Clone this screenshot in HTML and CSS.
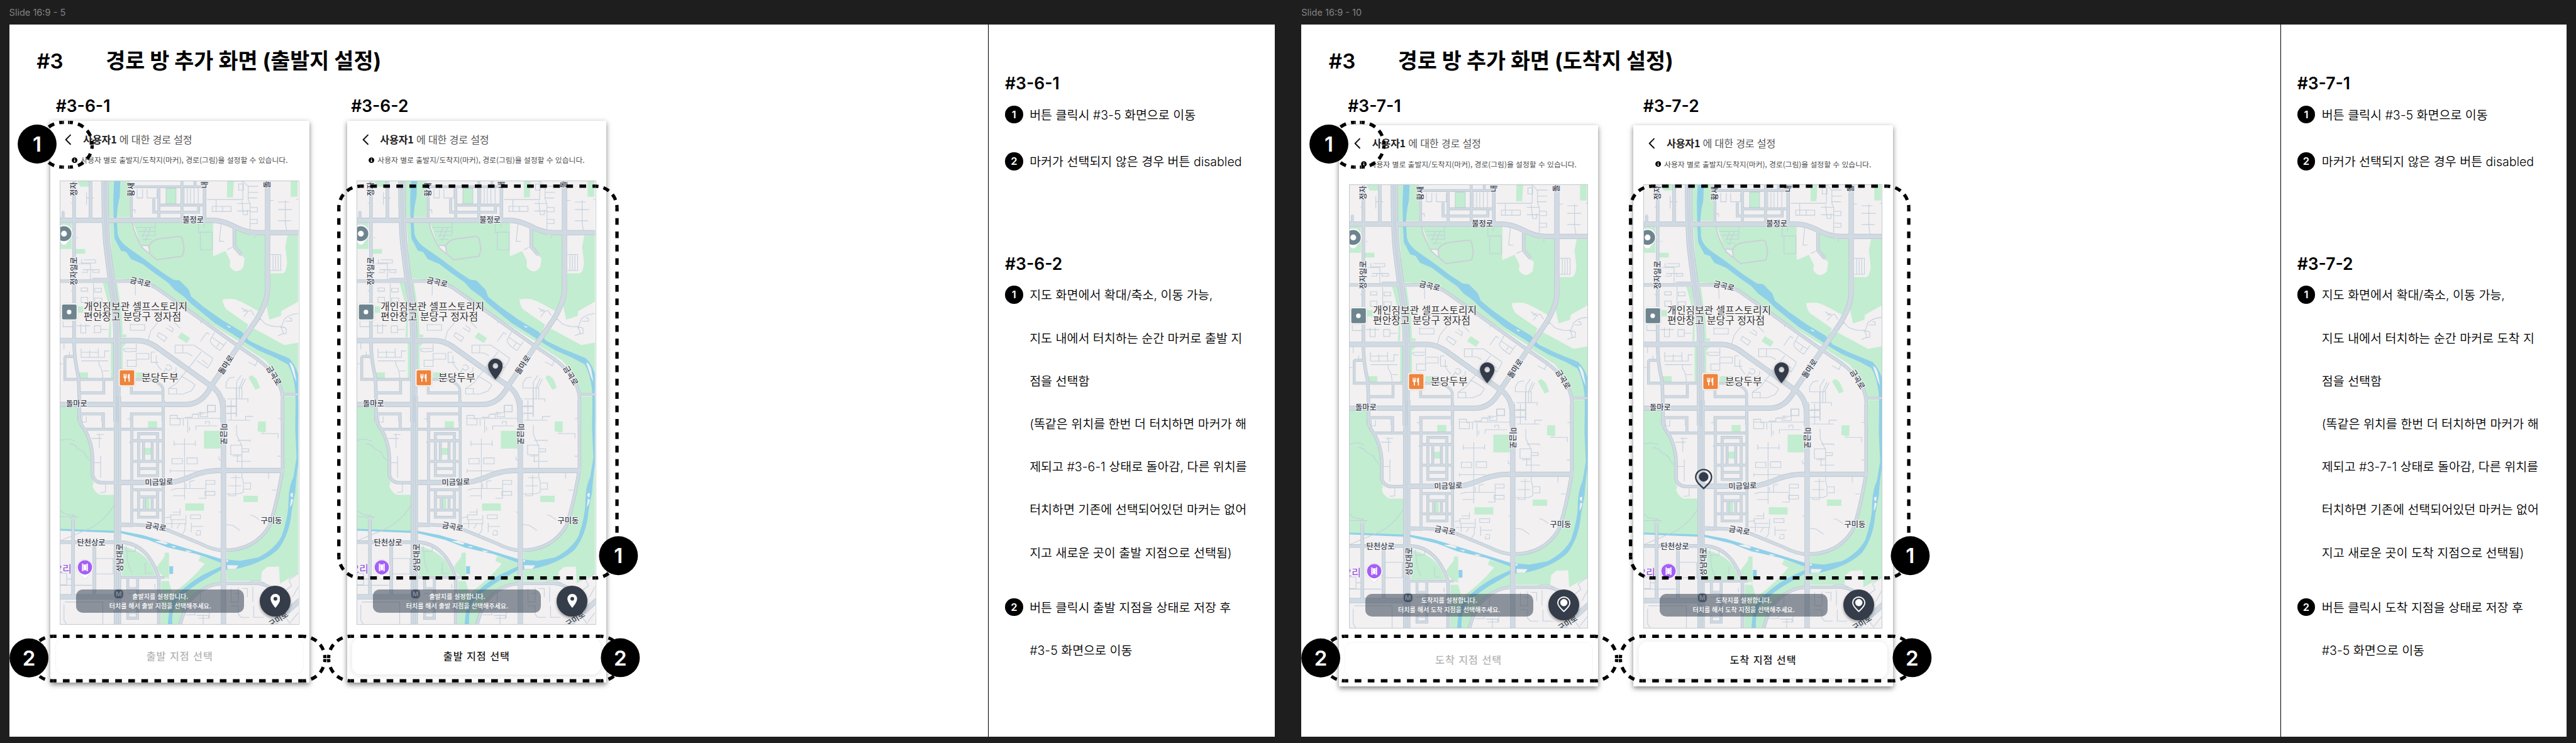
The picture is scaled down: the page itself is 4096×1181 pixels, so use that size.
FILE: index.html
```html
<!DOCTYPE html>
<html lang="ko">
<head>
<meta charset="utf-8">
<title>경로 방 추가 화면</title>
<link rel="stylesheet" href="styles.css">
</head>
<body>
<svg class="defs" aria-hidden="true">
  <defs>
    <g id="green-a">
      <path d="M372 90H490V315H372ZM200 90H263V125H215ZM690 137H745V232H688ZM1028 90H1065L1060 192H1027ZM1380 90H1418V188H1380ZM105 350H168V515H105ZM190 515H242V545H190Z"/>
      <path d="M378 350H950V562L1018 528 1045 590 1042 625Q1060 655 1080 655 1100 655 1118 630L1125 575 1075 515V380Q1130 410 1175 430H1240V760Q1240 850 1200 905 1120 850 1070 830 1040 825 1003 832 1005 870 1025 895L1145 990 1110 1090H1085L810 895 600 745Q540 705 405 702L390 560Z"/>
      <path d="M1262 430H1362L1350 500 1360 600Q1355 665 1335 668H1268L1265 800 1245 870 1262 958 1325 935 1328 905 1422 845V430Z"/>
      <path d="M1145 1040L1178 1015 1345 1118 1422 1102V1420H1335Q1300 1290 1240 1215L1110 1120ZM1345 1440H1422V1600H1345ZM755 1070L775 1038 823 1075 805 1105ZM1147 1322Q1155 1305 1170 1310L1190 1330 1210 1385 1185 1398Z"/>
      <path d="M340 728H372L385 900V1070H372L380 900ZM410 730H420L445 930 450 1052H470V1070H435ZM205 1290H258V1325H205ZM385 1105H403V1325H385ZM438 1105H470L450 1130V1290H438ZM200 875H232V915H200ZM525 1290H590V1322H525ZM105 1505H205V1570H105Z"/>
    </g>
    <g id="green-b">
      <path d="M105 30H205Q205 100 240 155 278 220 280 300V400Q283 425 290 430L283 450Q295 485 325 495H402V690L105 675ZM590 110H640V145H590ZM572 250H608V286H572ZM572 512H598V568H572ZM900 160H992V253H900ZM1199 112H1242V165L1230 170 1197 162ZM1118 500H1198V533H1118ZM796 540H900V578H796Z"/>
      <path d="M1345 0H1422V905L1320 958 1315 870 1250 872 1220 895 1215 945H1025V795Q1150 785 1230 700 1300 620 1315 450L1342 360Z"/>
      <path d="M663 945H705L725 1010 740 1000Q830 940 905 855L870 840 880 815 1000 850V955Q860 975 800 1080L765 1172H662ZM638 872L680 820 683 797H706V935L690 930 655 905ZM455 765Q560 790 600 850 625 890 632 918H445Z"/>
    </g>
    <g id="water-a">
      <path d="M402 90H437L433 190Q420 250 417 320L422 420Q430 470 490 515L560 570 660 655 730 708 765 712 815 770 830 815 900 880 1000 960 1110 1035 1150 1090 1240 1140 1370 1200Q1405 1240 1422 1300V1600H1410L1405 1400Q1395 1300 1365 1240L1300 1200 1200 1150 1140 1110 1060 1050 960 980 900 925 830 860 790 815 735 770 700 725 630 670 560 610 495 578 470 535 440 525 405 450 400 350 398 200Z"/>
    </g>
    <g id="water-b">
      <path d="M1407 0H1422V330Q1410 400 1405 480L1385 580Q1375 700 1310 780 1240 840 1130 870 1060 890 1000 885L880 950Q780 1010 740 1060 720 1120 725 1172H700Q705 1080 730 1040 790 970 900 910L995 868V850L860 805 700 770 590 730 440 695 105 682V672L440 684 560 705 700 745 995 830 1100 840 1200 822Q1290 780 1330 710 1370 600 1368 520 1370 450 1395 400L1412 300 1405 150ZM708 868H729V908H708Z"/>
    </g>
    <g id="sand-b">
      <path d="M1378 490L1393 484 1390 510 1380 502ZM1382 515L1394 520 1386 545 1376 560ZM1028 862L1090 864 1075 882 1030 884ZM1022 836H1034V845H1022ZM625 738L665 735 700 748 690 755ZM715 762L745 765 735 772ZM795 784L835 790 810 795ZM685 930L710 937 700 945Z"/>
    </g>
    <g id="lane-a">
      <path d="M1030 90H1115V205H918M967 205V280M945 248H1050V280H945ZM1003 248V280M1118 90L1145 125V205L1155 230V390M1092 108H1118V146H1092ZM1145 122H1200M1145 160H1200M1142 195H1195M1085 230H1155M1085 277H1155M1110 215L1118 300H1140V270M1155 255H1195V282H1155M1155 330H1195V355H1155M1265 210H1285M1310 220H1370M1310 268H1388M1310 338H1382M1350 210V350L1357 400M1412 205H1422"/>
      <path d="M585 140V195H640V140M530 140V195H560V140M790 135V230M808 135V230M825 135V230M845 135V230M868 135V230M690 135H745V232H690ZM250 160V238M250 195H290M163 228H181M195 445H205M505 270H518V290M520 380H630M535 405H628M555 430H628M560 455H610M630 350V430M580 380L560 440M605 380L575 465M870 350V415L882 410H945V520H880V415M900 350V380M995 355L985 467H1010M1180 430V448M1268 550H1325V650H1268M1282 550V650M1296 550V650M1310 550V650M1055 505L1028 520"/>
      <path d="M222 580V603H300V583H235M272 603V705M205 608H272M228 645H320V662H285V645M222 662H255V645M163 778H181M288 730V880M220 760H256V780H220ZM295 762H332V785H295ZM220 818H256V850H220ZM295 823H335V848H295ZM520 740V805M120 970V1003H181M195 997H270M218 985V1042H246V985M293 997H328V1040H293ZM328 1020H368M492 985V1025H572V990H492M590 1090L605 1030 645 975M650 1040L695 1070 680 1095 640 1060ZM690 1010L725 1035 730 1015 705 995M735 975L768 1012M880 1095L915 1040 930 1050M960 1035L935 1085Q930 1110 990 1152L1025 1095M945 1070L1010 1120M970 1130L985 1105M883 970V982"/>
      <path d="M740 1118H845L948 1200Q950 1210 920 1262L860 1215M740 1118V1167H805L835 1185M783 1118V1167M885 1160L750 1355 705 1390V1425H785L830 1405 850 1370Q850 1360 770 1310M890 1212L920 1240M705 1390H748V1425M690 1245Q720 1235 720 1265 700 1290 688 1260M675 1290L690 1265M720 1300L745 1280V1258M125 1105V1145M105 1235H120M155 1160V1185M220 1140V1195H350V1155H375M220 1163H315M267 1150V1198M315 1140V1198M220 1217H370M318 1217V1240Q340 1270 340 1330M340 1280H373M455 1140Q450 1155 475 1160L525 1157V1110M455 1140H525M475 1213H525V1252H475ZM525 1170H595V1207H525ZM630 1162H608V1227H648M635 1185V1230Q650 1260 665 1275M1200 940L1240 985Q1290 1010 1330 1000L1345 955Q1370 925 1422 920M1325 1000L1340 1045 1310 1060M1325 1010Q1340 1000 1355 1015V1045L1325 1050M1350 968H1385Q1390 945 1370 948M1108 885L1140 908 1160 900 1178 932M1118 908L1140 895M1120 940L1145 905M1145 1223L1185 1247 1195 1215M1195 965L1215 955"/>
      <path d="M1105 1308L1080 1350V1568M1070 1318L1040 1325 1022 1355V1387H1110V1455M1118 1325L1095 1385M1130 1330L1105 1385M1095 1387V1455M1028 1455H1143V1475M1018 1505H1078M1028 1545H1078M1078 1387V1568M920 1495H963V1537H920ZM880 1535V1568H920M840 1550H900"/>
    </g>
    <g id="lane-b">
      <path d="M225 82V115H248V85M320 175V250M305 180H345M278 200H335M328 290V405M283 327H328M355 432V480L325 483M105 210Q150 195 185 215M155 228Q190 230 200 255 240 265 250 295L270 318M105 575Q130 605 175 600M105 610H205M160 620L178 600 195 620M105 735L220 690Q340 650 402 550M475 98H498V115M490 215V225"/>
      <path d="M712 80H752V98H768V130H712ZM712 95H995M795 90H835V75H870V95M870 65H920V90M918 28H962V60H918ZM810 100V170M785 98V135M820 140V160M855 155V135H975M908 125V112H930V130M732 230H852M735 212V240M852 212V240M792 200V520M723 305H780V333H723ZM805 302H863V333H805ZM713 370H860M713 362V380M983 295V310L995 315M1050 0V105M1025 30H1080M1022 70H1075M1030 105H1155M1130 103V85H1172M1080 130V180L1110 240V400M1085 210H1155V218M1048 235H1110V285H1048ZM1112 255H1148V270H1112M1085 285V325M1060 292H1105M1080 320H1160M1215 175H1310V200M1310 97H1325M1308 293H1325M1258 375V412M1275 470H1300M1110 400L1118 430V480L1095 490H1025M1122 433H1158V465H1122M1076 390V500M1050 405H1105M1035 448H1105M1038 490V500H1076"/>
      <path d="M718 470L745 462H905M730 500H795M800 435V460M822 460V425L848 420M848 420M910 420H960V440H910ZM870 513H910V440M905 478H960V497H905ZM768 568V600H715V625H795M725 585H768M685 615L720 610M825 600H880V620H825ZM800 650V600M750 670L768 645M690 645H795V680L780 700M830 660H895M830 640V690M857 690V705H880V682H857M722 625V670M1155 602Q1165 595 1205 625M1022 650L1060 655 1100 682M983 585H995"/>
      <path d="M300 828H397V908H300ZM105 905H140V965H105M140 935H170M105 968H280M130 1055H340V1172M125 1070V1150L140 1172M470 760V790H520V765M475 790Q470 850 500 900M575 850V905H610M628 960V985M645 975V1000M530 1010H475M470 1135H525V1115H480M735 1070H770M810 1060H870V1095H840M820 1085H845M880 990V1055M800 1122H850V1110M895 1122V1172M930 1110V1140M860 1125H925V1140H870M1050 985V1055H1090M1070 1010H1095M1090 980V1055M1110 985H1140V1030M1170 975V1055M1050 1075H1090V1120L1105 1135H1150M1175 1075V1135H1230M1145 955Q1160 940 1210 945L1240 958M1370 940L1422 905M1370 940L1385 970 1330 1010M1422 975L1390 1030M1340 1120L1380 1172M1380 1160L1422 1110"/>
    </g>
    <g id="small-a">
      <path d="M498 180V325M500 125H895M650 125V320M778 90V320M650 240H895M622 200V285H870V245M120 280V330M850 90V125M181 1190H140Q130 1190 130 1200V1333H400M345 1340V1418H215M498 1380V1418H673M440 1333H600Q673 1360 673 1400V1600M285 705H390M210 1550H340V1600M498 1600V1550H673M1335 1427H1422"/>
    </g>
    <g id="small-b">
      <path d="M675 0V650M440 152H680M500 650V72H675M210 72H343V150M240 152H405M538 175H643V395H538ZM500 212H675M500 320H675M565 212V320M613 212V320M538 358H643M500 468H675M538 470V612H643V470M500 575H675M570 505V575M613 505V575M538 505H643M478 930V985H530M440 927H680M532 927V1140H478V1110M440 655H510"/>
    </g>
    <g id="mid-a">
      <path d="M181 90V1100Q181 1200 205 1320 210 1400 210 1600M272 90V330M105 717H500Q560 715 630 755L800 890 1090 1125 1200 1210Q1320 1310 1335 1440V1600M1068 375V500L1105 550M903 90V330"/>
    </g>
    <g id="mid-b">
      <path d="M1335 0V360Q1300 560 1260 660 1180 785 1010 785 950 785 880 750L700 680 600 655 440 648M208 75Q208 120 240 155 280 220 283 300V390Q290 430 340 432H405M440 742Q530 745 590 815 630 865 650 930M105 742H405M175 625V1020M293 760V1020M768 1172Q800 1060 850 1020 920 960 1010 958H1200Q1250 965 1290 990M650 930V1172"/>
    </g>
    <g id="wide-a">
      <path d="M105 335H940Q1000 335 1060 370 1130 413 1190 413H1422M105 1090H530Q580 1090 630 1125L940 1375Q1000 1420 1005 1520V1600M1252 90V770Q1250 850 1190 960L1090 1125 940 1375Q890 1490 800 1490H105"/>
    </g>
    <g id="wide-b">
      <path d="M1005 0Q1008 60 1008 200V1172M440 430H720Q780 420 850 390 920 368 980 368H1335M105 1028H400M1432 1045L1260 1190"/>
    </g>
    <g id="trunk-a"><path d="M352 90Q352 330 362 480 385 700 405 850 418 950 418 1100V1600"/></g>
    <g id="trunk-b"><path d="M421 -20V1172"/></g>
    <g id="trunk-line-a"><path d="M347 90Q347 330 357 480 380 700 400 850 413 950 413 1100V1600M357 90Q357 330 367 480 390 700 410 850 423 950 423 1100V1600"/></g>
    <g id="trunk-line-b"><path d="M416 -20V1172M427 -20V1172"/></g>

    <symbol id="map-base" viewBox="105 90 1317 2780" preserveAspectRatio="none">
      <rect class="land" x="105" y="90" width="1317" height="2780"/>
      <use class="park" href="#green-a"/>
      <use class="park" href="#green-b" transform="translate(0 1463.3) scale(1 1.2)"/>
      <use class="water" href="#water-a"/>
      <use class="water" href="#water-b" transform="translate(0 1463.3) scale(1 1.2)"/>
      <use class="land" href="#sand-b" transform="translate(0 1463.3) scale(1 1.2)"/>
      <path class="land" d="M503 350Q520 420 560 500L605 560 590 500 550 490 515 370ZM1025 995L1048 1003 1040 1010ZM1372 1225Q1390 1230 1400 1270L1412 1350 1400 1320Z"/>
      <path class="track" d="M503 350Q515 430 560 510L640 583 780 560 790 515 780 450Q775 435 755 437L650 452Q610 460 595 495L600 550M555 493H595"/>
      <use class="lane" href="#lane-a"/>
      <use class="lane" href="#lane-b" transform="translate(0 1463.3) scale(1 1.2)"/>
      <g class="casing">
        <use class="small" href="#small-a"/><use class="mid" href="#mid-a"/><use class="wide" href="#wide-a"/><use class="trunk" href="#trunk-a"/>
        <g transform="translate(0 1463.3) scale(1 1.2)"><use class="small" href="#small-b"/><use class="mid" href="#mid-b"/><use class="wide" href="#wide-b"/><use class="trunk" href="#trunk-b"/></g>
      </g>
      <g class="surface">
        <use class="small" href="#small-a"/><use class="mid" href="#mid-a"/><use class="wide" href="#wide-a"/><use class="trunk" href="#trunk-a"/>
        <g transform="translate(0 1463.3) scale(1 1.2)"><use class="small" href="#small-b"/><use class="mid" href="#mid-b"/><use class="wide" href="#wide-b"/><use class="trunk" href="#trunk-b"/></g>
      </g>
      <use class="lane" href="#trunk-line-a"/>
      <use class="lane" href="#trunk-line-b" transform="translate(0 1463.3) scale(1 1.2)"/>
    </symbol>

    <symbol id="map-labels" viewBox="0 0 571.4 1064">
      <g class="road-name">
        <text transform="translate(33 19) rotate(-90)" y="6">정자</text>
        <text transform="translate(170 20) rotate(-90)" y="6">황새</text>
        <text transform="translate(347 9) rotate(-90)" y="6">내</text>
        <text transform="translate(497 8) rotate(-90)" y="6">돌</text>
        <text x="319" y="100">불정로</text>
        <text transform="translate(34 216) rotate(-90)" y="6">정자일로</text>
        <text transform="translate(192 243) rotate(13)" y="6">금곡로</text>
        <text transform="translate(398 441) rotate(-57)" y="6">돌마로</text>
        <text transform="translate(512 467) rotate(59)" y="6">금곡로</text>
        <text x="39" y="541">돌마로</text>
        <text transform="translate(391 607) rotate(90)" y="6">미금로</text>
        <text transform="translate(237 723) rotate(-2)" y="6">미금일로</text>
        <text transform="translate(229 830) rotate(10)" y="6">금곡로</text>
        <text x="506.5" y="822">구미동</text>
        <text x="74" y="874">탄천상로</text>
        <text transform="translate(143 904) rotate(-90)" y="6">성남대로</text>
        <text transform="translate(524 1052) rotate(-33)" y="6">구미로</text>
      </g>
      <g class="place-name">
        <text x="56" y="309">개인짐보관 셀프스토리지</text>
        <text x="56" y="334">편안창고 분당구 정자점</text>
        <text x="195" y="480">분당두부</text>
        <text class="cinema" x="-17" y="939">오리</text>
      </g>
      <path class="poi-edge" d="M8.7 104a21 21 0 0 1 21 21c0 13-10 17-14 24q-2 4-7 4t-7-4c-4-7-14-11-14-24a21 21 0 0 1 21-21z"/>
      <circle class="poi-gray" cx="8.7" cy="126" r="18"/><circle class="dot" cx="8.7" cy="126" r="7"/>
      <rect class="poi-edge" x="1" y="293" width="41" height="42" rx="6"/>
      <rect class="poi-gray" x="4" y="296" width="35" height="36" rx="3"/><circle class="dot" cx="21" cy="314" r="5.5"/>
      <rect class="poi-edge" x="139.500" y="451" width="41" height="42" rx="6"/>
      <rect class="poi-food" x="142.500" y="454" width="35" height="36" rx="3"/>
      <path class="dot" d="M151.500 463h1.800v6h1.200v-6h1.800v6h1.200v-6h1.800v7q0 3-2.700 3.500v8h-2.600v-8q-2.500-.5-2.500-3.500zM162 466q0-3 4.500-3.500v19h-2.700v-7.500H162z"/>
      <path class="poi-edge" d="M59 908a20 20 0 0 1 20 20c0 12-9 14-14 21q-2 5-6 5t-6-5c-5-7-14-9-14-21a20 20 0 0 1 20-20z"/>
      <circle class="poi-cinema" cx="59" cy="927" r="17.200"/>
      <path class="dot" d="M52 918h3.500v2h7v-2H66v18h-3.500v-2h-7v2H52z"/>
      <path class="film" d="M55.500 918V936M62.500 918V936"/>
      <rect class="metro" x="129" y="980" width="22" height="22" rx="8"/>
      <text class="metro-m" x="140" y="997">M</text>
    </symbol>

    <symbol id="pin" viewBox="5 2 14 20"><path d="M12 2C8.130 2 5 5.130 5 9c0 5.250 7 13 7 13s7-7.750 7-13c0-3.870-3.130-7-7-7zm0 9.700a2.700 2.700 0 1 1 0-5.400 2.700 2.700 0 0 1 0 5.400z"/></symbol>
    <symbol id="pin-ring" viewBox="0 0 42 50"><path class="ring" d="M21 2C10.500 2 2 10 2 20.500 2 31 12 39 21 47.500 30 39 40 31 40 20.500 40 10 31.500 2 21 2z"/><circle cx="21" cy="19.500" r="11"/></symbol>
    <symbol id="back" viewBox="0 0 16 27"><path class="chevron" d="M13.500 2.500L2.500 13.500l11 11"/></symbol>
    <symbol id="info" viewBox="0 0 14 14"><circle cx="7" cy="7" r="6.800"/><path class="info-i" d="M6 3h2v1.800H6zM5.200 6H8v3.800h1V11H5V9.800h1V7.200h-.8z"/></symbol>

    <symbol id="callouts" viewBox="22 59.500 3039 1709">
      <g class="dash">
        <path class="side" d="M149.300 294.500h3.500m10 0h3.500M149.300 401.700h3.500m10 0h3.500"/>
        <path class="corner" d="M167 294.500A53.700 53 0 0 1 220.700 347.500M167 401.700A53.700 53 0 0 0 220.700 349M149 294.500A53.700 53 0 0 0 95.300 347.500M149 401.700A53.700 53 0 0 1 95.300 349"/>
        <path class="run" d="M127 1528H727M127 1635H727M841.500 1528H1441M841.500 1635H1441M865 447.500H1429M865 1388H1429"/>
        <path class="run-tall" d="M813 500V1336M1481 500V1336"/>
        <path class="corner" d="M727 1528A53.500 52.500 0 0 1 779.500 1580.500M727 1635A53.500 52.500 0 0 0 779.500 1582.500M127 1528A53.500 52.500 0 0 0 73.500 1580.500M127 1635A53.500 52.500 0 0 1 73.500 1582.500M841.500 1528A53.500 52.500 0 0 0 788.500 1580.500M841.500 1635A53.500 52.500 0 0 1 788.500 1582.500M1441 1528A53.500 52.500 0 0 1 1494 1580.500M1441 1635A53.500 52.500 0 0 0 1494 1582.500M865 447.500A52 52 0 0 0 813 500M1429 447.500A52 52 0 0 1 1481 500M813 1336A52 52 0 0 0 865 1388M1481 1336A52 52 0 0 1 1429 1388"/>
      </g>
      <circle cx="88.500" cy="346.500" r="46.700"/><text x="88.500" y="365">1</text>
      <circle cx="69" cy="1580" r="46.700"/><text x="69" y="1598">2</text>
      <circle cx="1484.500" cy="1334.500" r="46.700"/><text x="1484.500" y="1353">1</text>
      <circle cx="1489" cy="1579.500" r="46.700"/><text x="1489" y="1598">2</text>
    </symbol>
  </defs>
</svg>

<div class="board">
  <section class="frame">
    <p class="frame-name">Slide 16:9 - 5</p>
    <article class="slide">
      <div class="stage">
        <h1 class="title"><span class="title-no">#3</span><span>경로 방 추가 화면 (출발지 설정)</span></h1>
        <div class="screen-names"><h2>#3-6-1</h2><h2>#3-6-2</h2></div>
        <div class="screens">
          <div class="phone">
            <header class="bar"><svg class="back"><use href="#back"/></svg><p><b>사용자1</b> 에 대한 경로 설정</p></header>
            <p class="hint"><svg class="info"><use href="#info"/></svg>사용자 별로 출발지/도착지(마커), 경로(그림)을 설정할 수 있습니다.</p>
            <div class="map">
              <svg class="layer"><use href="#map-base"/></svg><svg class="layer"><use href="#map-labels"/></svg>
              <p class="toast">출발지를 설정합니다.<br>터치를 해서 출발 지점을 선택해주세요.</p>
              <div class="fab"><svg class="fab-pin"><use href="#pin"/></svg></div>
            </div>
            <button class="choose" disabled>출발 지점 선택</button>
          </div>
          <div class="phone">
            <header class="bar"><svg class="back"><use href="#back"/></svg><p><b>사용자1</b> 에 대한 경로 설정</p></header>
            <p class="hint"><svg class="info"><use href="#info"/></svg>사용자 별로 출발지/도착지(마커), 경로(그림)을 설정할 수 있습니다.</p>
            <div class="map">
              <svg class="layer"><use href="#map-base"/></svg><svg class="layer"><use href="#map-labels"/></svg>
              <svg class="marker start"><use href="#pin"/></svg>
              <p class="toast">출발지를 설정합니다.<br>터치를 해서 출발 지점을 선택해주세요.</p>
              <div class="fab"><svg class="fab-pin"><use href="#pin"/></svg></div>
            </div>
            <button class="choose">출발 지점 선택</button>
          </div>
        </div>
      </div>
      <aside class="notes">
        <section>
          <h2>#3-6-1</h2>
          <ol>
            <li><i>1</i><p>버튼 클릭시 #3-5 화면으로 이동</p></li>
            <li><i>2</i><p>마커가 선택되지 않은 경우 버튼 disabled</p></li>
          </ol>
        </section>
        <section>
          <h2>#3-6-2</h2>
          <ol class="loose">
            <li><i>1</i><p>지도 화면에서 확대/축소, 이동 가능,<br>지도 내에서 터치하는 순간 마커로 출발 지<br>점을 선택함<br>(똑같은 위치를 한번 더 터치하면 마커가 해<br>제되고 #3-6-1 상태로 돌아감, 다른 위치를<br>터치하면 기존에 선택되어있던 마커는 없어<br>지고 새로운 곳이 출발 지점으로 선택됨)</p></li>
            <li><i>2</i><p>버튼 클릭시 출발 지점을 상태로 저장 후<br>#3-5 화면으로 이동</p></li>
          </ol>
        </section>
      </aside>
      <svg class="callouts"><use href="#callouts"/></svg>
    </article>
  </section>

  <section class="frame">
    <p class="frame-name">Slide 16:9 - 10</p>
    <article class="slide">
      <div class="stage">
        <h1 class="title"><span class="title-no">#3</span><span>경로 방 추가 화면 (도착지 설정)</span></h1>
        <div class="screen-names"><h2>#3-7-1</h2><h2>#3-7-2</h2></div>
        <div class="screens lowered">
          <div class="phone">
            <header class="bar"><svg class="back"><use href="#back"/></svg><p><b>사용자1</b> 에 대한 경로 설정</p></header>
            <p class="hint"><svg class="info"><use href="#info"/></svg>사용자 별로 출발지/도착지(마커), 경로(그림)을 설정할 수 있습니다.</p>
            <div class="map">
              <svg class="layer"><use href="#map-base"/></svg><svg class="layer"><use href="#map-labels"/></svg>
              <svg class="marker start"><use href="#pin"/></svg>
              <p class="toast">도착지를 설정합니다.<br>터치를 해서 도착 지점을 선택해주세요.</p>
              <div class="fab"><svg class="fab-ring"><use href="#pin-ring"/></svg></div>
            </div>
            <button class="choose" disabled>도착 지점 선택</button>
          </div>
          <div class="phone">
            <header class="bar"><svg class="back"><use href="#back"/></svg><p><b>사용자1</b> 에 대한 경로 설정</p></header>
            <p class="hint"><svg class="info"><use href="#info"/></svg>사용자 별로 출발지/도착지(마커), 경로(그림)을 설정할 수 있습니다.</p>
            <div class="map">
              <svg class="layer"><use href="#map-base"/></svg><svg class="layer"><use href="#map-labels"/></svg>
              <svg class="marker start"><use href="#pin"/></svg>
              <svg class="marker goal"><use href="#pin-ring"/></svg>
              <p class="toast">도착지를 설정합니다.<br>터치를 해서 도착 지점을 선택해주세요.</p>
              <div class="fab"><svg class="fab-ring"><use href="#pin-ring"/></svg></div>
            </div>
            <button class="choose">도착 지점 선택</button>
          </div>
        </div>
      </div>
      <aside class="notes">
        <section>
          <h2>#3-7-1</h2>
          <ol>
            <li><i>1</i><p>버튼 클릭시 #3-5 화면으로 이동</p></li>
            <li><i>2</i><p>마커가 선택되지 않은 경우 버튼 disabled</p></li>
          </ol>
        </section>
        <section>
          <h2>#3-7-2</h2>
          <ol class="loose">
            <li><i>1</i><p>지도 화면에서 확대/축소, 이동 가능,<br>지도 내에서 터치하는 순간 마커로 도착 지<br>점을 선택함<br>(똑같은 위치를 한번 더 터치하면 마커가 해<br>제되고 #3-7-1 상태로 돌아감, 다른 위치를<br>터치하면 기존에 선택되어있던 마커는 없어<br>지고 새로운 곳이 도착 지점으로 선택됨)</p></li>
            <li><i>2</i><p>버튼 클릭시 도착 지점을 상태로 저장 후<br>#3-5 화면으로 이동</p></li>
          </ol>
        </section>
      </aside>
      <svg class="callouts"><use href="#callouts"/></svg>
    </article>
  </section>
</div>
</body>
</html>
```

FILE: styles.css
```css
/* 1rem is 100 units of the 6186-unit-wide board */
html { font-size: calc(100vw / 61.86); }
* { box-sizing: border-box; margin: 0; padding: 0; }
body { background: #1e1e1e; color: #000; overflow: hidden; font-family: Inter, "Noto Sans CJK KR", sans-serif; }
svg { display: block; }
.defs { position: absolute; width: 0; height: 0; }

.board { display: flex; gap: .64rem; padding-left: .22rem; width: 61.86rem; height: 17.84rem; }
.frame { width: 30.39rem; flex: none; }
.frame-name { height: .595rem; padding-top: .18rem; font-size: .22rem; line-height: .26rem; color: #828282; }
.slide { position: relative; display: flex; height: 17.09rem; background: #fff; }
.stage { width: 23.51rem; flex: none; padding-top: .575rem; }
.title { display: flex; align-items: baseline; height: .6rem; line-height: .6rem; padding-left: .66rem; font-size: .51rem; font-weight: 700; white-space: nowrap; }
.title-no { width: 1.66rem; font-weight: 600; font-size: .5rem; }
.screen-names { display: grid; grid-template-columns: 7.09rem auto; margin-top: .54rem; padding-left: 1.12rem; }
h2 { font-size: .4rem; line-height: .48rem; font-weight: 600; }
.screens { display: flex; gap: .904rem; padding: .117rem 0 0 .983rem; }
.lowered { gap: .848rem; padding: .21rem 0 0 .904rem; }

.phone { width: 6.226rem; height: 13.485rem; flex: none; padding: .31rem .13rem .21rem; background: #fff; box-shadow: 0 .05rem .12rem rgba(0,0,0,.5); font-family: "Noto Sans CJK KR", sans-serif; }
.bar { display: flex; align-items: center; gap: .275rem; height: .27rem; padding-left: .23rem; font-size: .244rem; line-height: .27rem; letter-spacing: -.003rem; color: #555; white-space: nowrap; }
.bar b { color: #222; }
.back { width: .16rem; height: .27rem; }
.chevron { fill: none; stroke: #111; stroke-width: 3; stroke-linecap: round; stroke-linejoin: round; }
.hint { display: flex; align-items: center; gap: .07rem; margin-top: .22rem; padding-left: .395rem; font-size: .179rem; letter-spacing: -.0005rem; line-height: .27rem; height: .27rem; color: #4c4c4c; white-space: nowrap; }
.info { width: .14rem; height: .14rem; fill: #000; }
.info-i { fill: #fff; }
.map { position: relative; width: 5.714rem; height: 10.64rem; margin: .367rem 0 0 .123rem; overflow: hidden; outline: .01rem solid #c3c9cf; outline-offset: -.01rem; }
.layer { position: absolute; inset: 0; width: 100%; height: 100%; }
.toast { position: absolute; left: .378rem; top: 9.815rem; width: 4.03rem; height: .55rem; padding-top: .05rem; border-radius: .16rem; background: rgba(64,74,90,.57); color: #fff; font-size: .152rem; line-height: .225rem; font-weight: 500; text-align: center; white-space: nowrap; }
.fab { position: absolute; left: 4.782rem; top: 9.716rem; width: .74rem; height: .74rem; display: grid; place-items: center; border-radius: 50%; background: #353c4a; fill: #fff; stroke: #fff; box-shadow: 0 .04rem .07rem rgba(0,0,0,.35); }
.fab-pin { width: .24rem; height: .335rem; stroke: none; }
.fab-ring { width: .32rem; height: .38rem; margin-top: -.04rem; }
.ring { fill: none; stroke-width: 3.6; }
.marker { position: absolute; fill: #333a49; }
.start { left: 3.13rem; top: 4.27rem; width: .356rem; height: .5rem; filter: drop-shadow(0 .03rem .04rem rgba(0,0,0,.3)); }
.goal { left: 1.22rem; top: 6.81rem; width: .42rem; height: .5rem; stroke: #333a49; }
.goal circle, .fab circle { stroke: none; }
.choose { display: block; width: 100%; height: .875rem; margin-top: .325rem; border: 0; border-radius: .2rem; background: #fff; box-shadow: 0 .02rem .18rem rgba(0,0,0,.12); color: #1a1a1a; font: 500 .245rem/.3rem "Noto Sans CJK KR", sans-serif; letter-spacing: .014rem; }
.choose:disabled { border: .015rem solid #f5f5f5; box-shadow: none; color: #b4b4b4; }

/* map drawing */
#map-base path, .lane path { vector-effect: non-scaling-stroke; }
g[id] > path { vector-effect: non-scaling-stroke; }
.land { fill: #f2f0f1; }
.park { fill: #c2edd0; }
.water { fill: #8fd0e8; }
.track { fill: none; stroke: #cbcfd8; stroke-width: .03rem; }
.lane { fill: none; stroke: #c2cfdc; stroke-width: .016rem; }
.casing { fill: none; stroke: #b6c3cf; }
.surface { fill: none; stroke: #d1dae2; stroke-linecap: square; }
.casing .small { stroke-width: .066rem; }
.casing .mid { stroke-width: .082rem; }
.casing .wide { stroke-width: .124rem; }
.casing .trunk { stroke-width: .172rem; }
.surface .small { stroke-width: .045rem; }
.surface .mid { stroke-width: .061rem; }
.surface .wide { stroke-width: .103rem; }
.surface .trunk { stroke-width: .15rem; }
.road-name, .place-name { font-family: "Noto Sans CJK KR", sans-serif; paint-order: stroke; stroke: #f6f5f6; stroke-width: 3px; stroke-linejoin: round; }
.road-name { font-size: 18.5px; font-weight: 500; fill: #37414f; text-anchor: middle; }
.place-name { font-size: 24px; fill: #333; }
.cinema { fill: #8a45e0; }
.poi-edge { fill: #fff; stroke: #c8c8c8; stroke-width: .8px; }
.poi-gray { fill: #6e858f; }
.poi-food { fill: #ee843d; }
.poi-cinema { fill: #a45ff5; }
.dot { fill: #fff; }
.film { stroke: #a45ff5; stroke-width: 1.4px; stroke-dasharray: 2.5 2; }
.metro { fill: #46556a; stroke: #b9c2cc; stroke-width: 2px; }
.metro-m { fill: #d5dbe2; font: 700 16px Inter, sans-serif; text-anchor: middle; }

.notes { flex: 1; border-left: .02rem solid #000; padding: 1.175rem 0 0 .39rem; }
.notes section + section { margin-top: 1.69rem; }
.notes ol { display: flex; flex-direction: column; gap: .095rem; list-style: none; }
.notes .loose { gap: .29rem; }
.notes li { display: flex; gap: .16rem; }
.notes i { width: .43rem; height: .43rem; margin-top: .285rem; flex: none; border-radius: 50%; background: #000; color: #fff; font: 600 .25rem/.43rem Inter, sans-serif; text-align: center; }
.notes p { font-size: .295rem; line-height: 1.03rem; font-weight: 350; white-space: nowrap; }

.callouts { position: absolute; inset: 0; width: 100%; height: 100%; }
.callouts text, #callouts text { fill: #fff; font: 600 50px Inter, sans-serif; text-anchor: middle; }
.dash { fill: none; stroke: #000; stroke-width: 8px; }
.run { stroke-dasharray: 16 15.4; stroke-dashoffset: 8; }
.run-tall { stroke-dasharray: 16 16.15; stroke-dashoffset: 8; }
.corner { stroke-dasharray: 15 12.4; stroke-dashoffset: 7.5; }
```
